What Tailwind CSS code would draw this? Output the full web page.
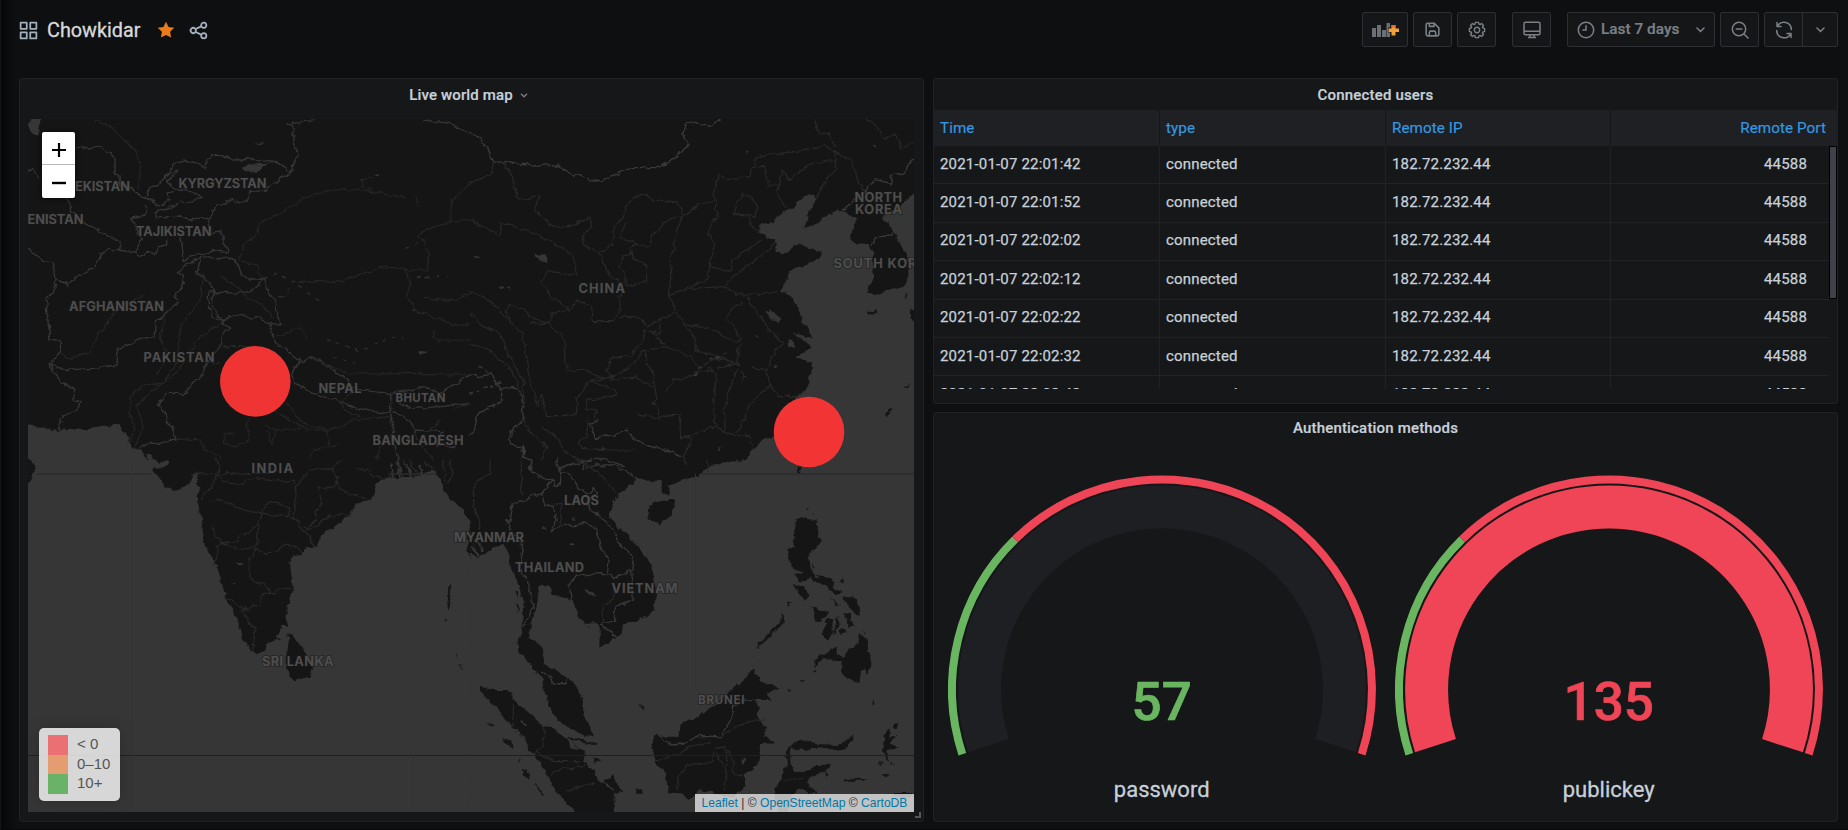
<!DOCTYPE html>
<html lang="en">
<head>
<meta charset="utf-8">
<title>Chowkidar</title>
<script src="https://cdn.jsdelivr.net/npm/@tailwindcss/browser@4"></script>
</head>
<body class="bg-[#0e0f11] font-['Roboto',sans-serif] text-[#c7d0d9]">
<div class="relative flex h-[830px] w-[1848px] flex-col overflow-hidden">
  <div class="absolute inset-y-0 left-0 w-4 bg-linear-to-r from-black/60 to-transparent"></div>
  <div class="absolute inset-y-0 left-0 w-px bg-[#141619]"></div>
  <div class="absolute inset-x-0 bottom-0 h-px bg-[#08070c]"></div>

  <header class="flex h-[78px] shrink-0 items-start justify-between pr-[10px] pl-[18px]">
    <div class="flex h-[60px] items-center">
      <svg class="size-[21px]" viewBox="0 0 24 24" fill="#a4b0bd"><path d="M10,13H3a1,1,0,0,0-1,1v7a1,1,0,0,0,1,1h7a1,1,0,0,0,1-1V14A1,1,0,0,0,10,13ZM9,20H4V15H9ZM21,2H14a1,1,0,0,0-1,1v7a1,1,0,0,0,1,1h7a1,1,0,0,0,1-1V3A1,1,0,0,0,21,2ZM20,9H15V4h5Zm1,4H14a1,1,0,0,0-1,1v7a1,1,0,0,0,1,1h7a1,1,0,0,0,1-1V14A1,1,0,0,0,21,13Zm-1,7H15V15h5ZM10,2H3A1,1,0,0,0,2,3v7a1,1,0,0,0,1,1h7a1,1,0,0,0,1-1V3A1,1,0,0,0,10,2ZM9,9H4V4H9Z"/></svg>
      <h1 class="ml-2 w-[110px] pt-px text-[19.800px] leading-none text-[#d8d9da] [-webkit-text-stroke:0.3px]">Chowkidar</h1>
      <svg class="size-[18px]" viewBox="0 0 18 18" fill="#eb7b18"><path d="M9 .8l2.5 5.2 5.8.8-4.2 4 1 5.8L9 13.9l-5.1 2.7 1-5.8-4.2-4 5.800-.8z"/></svg>
      <svg class="ml-[13px] size-[21px]" viewBox="0 0 24 24" fill="#a4b0bd"><path d="M18,14a4,4,0,0,0-3.08,1.48l-5.1-2.35a3.64,3.64,0,0,0,0-2.26l5.1-2.35A4,4,0,1,0,14,6a4.17,4.17,0,0,0,.07.71L8.79,9.14a4,4,0,1,0,0,5.72l5.28,2.43A4.17,4.17,0,0,0,14,18a4,4,0,1,0,4-4ZM18,4a2,2,0,1,1-2,2A2,2,0,0,1,18,4ZM6,14a2,2,0,1,1,2-2A2,2,0,0,1,6,14Zm12,6a2,2,0,1,1,2-2A2,2,0,0,1,18,20Z"/></svg>
    </div>
    <div class="mt-3 flex h-[35px] gap-[5px] text-[#7b8087]">
      <div class="flex w-[46px] items-center justify-center rounded-xs border border-[#2c3033] bg-[#141618]">
        <svg class="h-[16px] w-[27px]" viewBox="0 0 27 16"><path fill="#6b7077" d="M0 6h4v9H0zM5 3h4v12H5zM10 8h4v7h-4zM14.500 1h3.500v4.500h-2v5h2v4.500h-3.500z"/><path fill="#f2a03d" d="M19.500 3h4v3.500H27v3.500h-3.500v3.500h-4V10H16.500V6.500h3z"/><path fill="#ee6a33" d="M19.500 3h4v2.500h-4z"/></svg>
      </div>
      <div class="flex w-[39px] items-center justify-center rounded-xs border border-[#2c3033] bg-[#141618]">
        <svg class="size-[19px]" viewBox="0 0 24 24" fill="currentColor"><path d="M20.710,9.290l-6-6a1,1,0,0,0-.32-.21A1.090,1.090,0,0,0,14,3H6A3,3,0,0,0,3,6V18a3,3,0,0,0,3,3H18a3,3,0,0,0,3-3V10A1,1,0,0,0,20.710,9.290ZM9,5h4V7H9Zm6,14H9V16a1,1,0,0,1,1-1h4a1,1,0,0,1,1,1Zm4-1a1,1,0,0,1-1,1H17V16a3,3,0,0,0-3-3H10a3,3,0,0,0-3,3v3H6a1,1,0,0,1-1-1V6A1,1,0,0,1,6,5H7V8A1,1,0,0,0,8,9h6a1,1,0,0,0,1-1V6.410l4,4Z"/></svg>
      </div>
      <div class="flex w-[39px] items-center justify-center rounded-xs border border-[#2c3033] bg-[#141618]">
        <svg class="size-[18px]" viewBox="-9 -9 18 18" fill="none" stroke="currentColor" stroke-width="1.400" stroke-linejoin="round"><circle r="2.700"/><path d="M-1.600-7.600H1.600L2-5.800 3-5.400 4.600-6.500 6.500-4.600 5.400-3 5.800-2 7.600-1.600V1.600L5.800 2 5.400 3 6.500 4.600 4.600 6.500 3 5.400 2 5.800 1.600 7.600H-1.600L-2 5.800-3 5.400-4.600 6.500-6.500 4.600-5.400 3-5.800 2-7.600 1.600V-1.600L-5.800-2-5.400-3-6.500-4.600-4.600-6.500-3-5.400-2-5.800Z"/></svg>
      </div>
      <div class="ml-[11px] flex w-[39px] items-center justify-center rounded-xs border border-[#2c3033] bg-[#141618]">
        <svg class="size-[18px]" viewBox="0 0 18 18" fill="none" stroke="currentColor" stroke-width="1.500" stroke-linejoin="round"><rect x="1" y="1.300" width="16" height="12.500" rx="1.500"/><path d="M1 10.300h16M7 14v2M11 14v2M5 16.400h8"/></svg>
      </div>
      <div class="ml-[11px] flex w-[148px] items-center rounded-xs border border-[#2c3033] bg-[#141618] pl-[9px]">
        <svg class="size-[18px]" viewBox="0 0 18 18" fill="none" stroke="currentColor" stroke-width="1.500" stroke-linecap="round"><circle cx="9" cy="9" r="7.700"/><path d="M9 4.800V9H6"/></svg>
        <span class="ml-[6px] w-[95px] text-[15.400px] leading-none font-medium whitespace-nowrap [-webkit-text-stroke:0.2px]">Last 7 days</span>
        <svg class="h-[6px] w-[9px]" viewBox="0 0 9 6" fill="none" stroke="currentColor" stroke-width="1.500" stroke-linecap="round"><path d="M1 1l3.500 3.500L8 1"/></svg>
      </div>
      <div class="flex w-[39px] items-center justify-center rounded-xs border border-[#2c3033] bg-[#141618]">
        <svg class="size-[18px]" viewBox="0 0 18 18" fill="none" stroke="currentColor" stroke-width="1.500" stroke-linecap="round"><circle cx="8" cy="8" r="6.700"/><path d="M5.200 8h5.600M13 13l4 4"/></svg>
      </div>
      <div class="flex w-[74px] rounded-xs border border-[#2c3033] bg-[#141618]">
        <div class="flex w-[38px] items-center justify-center border-r border-[#2c3033]">
          <svg class="size-[18px]" viewBox="0 0 18 18" fill="none" stroke="currentColor" stroke-width="1.500" stroke-linecap="round" stroke-linejoin="round"><path d="M2 1.500V5.500H6M2.500 5.200A7.300 7.300 0 0 1 16.300 8.600M16 16.500V12.500H12M15.500 12.800A7.300 7.300 0 0 1 1.700 9.400"/></svg>
        </div>
        <div class="flex flex-1 items-center justify-center">
          <svg class="h-[6px] w-[9px]" viewBox="0 0 9 6" fill="none" stroke="currentColor" stroke-width="1.500" stroke-linecap="round"><path d="M1 1l3.500 3.500L8 1"/></svg>
        </div>
      </div>
    </div>
  </header>

  <main class="flex h-[744px] gap-[9px] pr-[10px] pl-[19px]">
    <section class="relative flex w-[905px] flex-col rounded-[3px] border border-[#202226] bg-[#151719] px-2">
      <div class="flex h-10 shrink-0 items-center justify-center gap-[7px] pr-[6px] pb-[8px]">
        <h2 class="text-[15px] leading-none font-medium tracking-[0.150px] [-webkit-text-stroke:0.2px]">Live world map</h2>
        <svg class="h-[5px] w-[8px]" viewBox="0 0 8 5" fill="none" stroke="#7b8087" stroke-width="1.300"><path d="M1 .8l3 3 3-3"/></svg>
      </div>
      <div class="relative h-[693px] w-[886px] overflow-hidden bg-[#151515]">
        <svg class="block h-[693px] w-[886px]" viewBox="28 119 886 693" fill="none" stroke-linejoin="round" stroke-linecap="round">
          <defs>
            <filter id="rough" filterUnits="userSpaceOnUse" x="0" y="90" width="950" height="750" color-interpolation-filters="sRGB">
              <feTurbulence type="fractalNoise" baseFrequency="0.130" numOctaves="3" seed="4" result="n"/>
              <feDisplacementMap in="SourceGraphic" in2="n" scale="6" xChannelSelector="R" yChannelSelector="G"/>
            </filter>
          </defs>
          <g filter="url(#rough)">
            <rect x="0" y="90" width="950" height="750" fill="#151515"/>
            <!-- north-west quarter -->
            <g transform="translate(20 110) scale(.33333)">
              <path fill="#363636" d="M0 946L24 946 60 952 110 962 160 955 205 958 250 950 295 942 305 962 322 972 332 1005 350 1018 368 1022 388 1054H32L24 1040H0zM35 0H62L60 50 50 80 35 72 25 50zM665 175L700 160 740 158 715 187 690 187zM1060 195L1080 193 1078 200zM1195 720L1220 722 1205 733zM700 98L735 98 730 104z"/>
              <path fill="#363636" d="M380 1030L400 1045 415 1060 448 1050 430 1075 395 1070z"/>
              <g stroke="#363636" stroke-width="4">
                <path d="M165 115L235 112 245 108 285 148 285 195 300 197 302 225 330 232 350 250 375 262 390 235 420 220 445 195 475 180 440 215M420 220L470 158 500 152 555 172 562 145 590 132 640 150 700 148 770 155 815 185 820 155 835 135 822 100 822 55 802 42 840 38 850 32 900 28"/>
                <path d="M815 190L790 200 740 240 690 245 680 272 660 280 640 265 600 285 575 300 578 320 565 330 575 370 605 365 612 400 625 425M375 262L400 270 405 290 430 285 450 265 440 250 460 245M440 215L460 235 500 240 545 258 520 275 480 280 430 300 405 305 410 320 470 320 510 330 530 325 565 325"/>
                <path d="M380 290L375 315 335 325 345 345 365 385 345 430 360 442 385 425 405 435 415 410 440 405 440 385M480 385L490 455 530 430 555 435 580 420 620 428M140 265L155 300 200 345 300 395 300 420 345 430M24 412L70 455 100 458 105 510 145 522 175 495 225 470 240 432 270 418 300 420M0 180H40L60 210"/>
                <path d="M105 510L100 550 78 570 80 600 90 690 120 695 122 720 90 765 140 780 220 775 290 765 295 715 340 700 345 688 405 680 410 630 440 610 470 580 470 550 490 525 490 500 475 485 500 460 545 445 600 442 640 445 655 465 665 495 690 510 735 510 740 540 765 570 765 595 785 640 750 648M90 765L125 820 160 830 162 870 180 880 175 895 125 920 118 960"/>
                <path d="M735 510L720 520 690 545 640 550 595 545 565 550 565 590 575 620 605 635 632 655 605 675 600 710 560 760 545 800 520 815 495 850 440 850 415 885 435 905 440 935 455 950 468 990 420 1000 385 1000 350 1020M605 635L640 615 690 620 720 625 755 645M545 445L530 490 570 515 585 545 575 570 580 600 605 635"/>
                <path d="M750 648L765 700 800 720 825 745 850 755 870 740 915 760 950 790 965 795 1000 835 1060 845 1115 850 1170 840 1210 830 1260 850 1350 795M840 745L815 790 820 815 880 850 930 865 970 875 1010 895 1060 905 1112 910 1112 850M1112 905L1120 960 1110 975 1125 1005 1135 1060M1120 905L1170 930 1180 960 1270 965 1250 1005 1300 1010M1130 880L1180 895 1260 890 1310 885 1350 880M1210 30L1290 40 1350 70"/>
              </g>
              <g stroke="#262626" stroke-width="3.500">
                <path d="M220 30L270 45 310 90 345 120 362 160 355 235M658 450L665 405 705 380 720 340 780 310 860 260 940 240 1000 238 1060 245 1155 265M1350 220L1295 275 1290 335 1195 370 1230 435 1220 480 1160 480 1100 470 1030 490 960 515 890 512 820 515M1290 335L1350 330M1155 480L1170 520 1160 560 1190 605 1240 620 1300 645 1350 640M1215 565L1300 572 1350 550M1235 665L1250 690 1350 690"/>
                <path d="M370 555L300 590 260 640 230 680 210 725 150 745 120 730M550 500L540 570 480 650 470 760 430 820 370 825 330 860 330 920 345 960 325 1000M600 640L540 680 470 790 400 840 350 890 370 950 345 1010M440 610L420 680 440 730 415 790M770 680L840 650 860 690M870 745L960 780 1000 792 1200 790 1300 795 1350 790M605 500L650 530 680 560 730 590 760 625"/>
                <path d="M800 880L850 940 930 960 1000 930 1110 920M770 905L860 960 920 960 930 1010 960 1000M470 985L540 990 560 1020 600 1040 600 1050M690 925L680 950 690 990 640 1010 610 1000 615 970 645 975M740 950L770 960 755 1000 740 960M770 960L840 955M1000 835L960 880 970 900 1020 920M665 455L710 465 725 500M600 710L700 710M550 760H600M870 1045L875 1020 930 1010M1180 960L1200 1000 1240 1050M1300 900L1350 880M1260 930L1230 960M1120 975L1080 1010 1070 1050"/>
                <path stroke="#303030" stroke-width="4" stroke-dasharray="8 22" d="M735 505L770 490 820 515 800 555 770 570M840 530L900 575M920 690L1020 720 1060 705 1110 680 1150 680M1190 500L1290 500M1160 415L1215 390M1175 600L1200 605M940 740L1020 765"/>
                <path d="M1188 260L1195 285M1030 215L1025 230 1060 240M1060 200L1025 212"/>
              </g>
            </g>
            <!-- north-east quarter -->
            <g transform="translate(470 110) scale(.33333)">
              <path fill="#363636" d="M1005 252L1030 255 1040 270 1010 318 1020 320 1000 355 1030 345 1060 322 1105 303 1125 305 1160 330 1150 355 1140 385 1160 400 1195 402 1210 430 1205 470 1210 500 1198 530 1190 550 1215 555 1270 535 1300 528 1315 500 1312 440 1290 395 1270 360 1240 325 1240 315 1300 280 1332 250 1400 240V1056H826L845 1020 880 990 910 980 940 930 970 870 1015 830 1015 800 1030 770 1000 745 975 745 1025 710 1000 690 960 665 1025 685 1020 660 995 635 990 610 970 565 932 540 965 480 1050 445 1055 425 1000 410 985 402 960 420 940 432 920 425 918 390 885 382 868 360 875 340 910 340 930 310 970 295zM195 435L225 432 235 458 210 452zM955 690L972 700 970 715 958 708zM885 605L905 600 935 630 925 640z"/>
              <path fill="#151515" d="M1190 605L1215 598 1218 606 1195 614zM1320 600H1340V635L1325 625zM1305 550H1312L1308 572zM1245 915L1270 892 1268 900 1250 920zM1305 835L1320 822V830z"/>
              <path stroke="#3a3a3a" stroke-width="4" d="M0 70L30 80 72 157 110 155 200 165 265 168 290 185 350 205 395 213 460 182 500 173 560 173 600 155 640 118 655 105 638 75 650 38 670 35 715 52 750 28M1120 300L1150 270 1185 245 1215 208 1265 222 1260 195 1300 190 1330 145M1205 405L1220 380 1265 378 1275 365M0 790L30 800 65 790 80 820 95 840 130 825 155 855 160 930 120 970 118 1005 160 1010 160 1045 185 1050 180 1080M95 840L95 875 25 905 15 950 0 975M380 985L405 975 430 980 470 960 490 985 540 1010 580 1020 635 1040M380 985L360 945 385 930M270 1075L330 1055 400 1045 460 1070"/>
              <path stroke="#292929" stroke-width="3.500" d="M105 160L125 205 145 270 210 260 190 300 240 340 275 355 360 325 365 350 340 380 345 410 385 425 430 405 430 350 460 325 465 300 462 290 510 252 545 270 620 275 637 295 635 320 605 325 580 340 545 380 540 408 510 408 450 380 465 340M72 157L60 195 0 218M0 330L90 375 95 340 135 350 200 375 280 415 310 440 320 495 290 490 235 485 215 510 240 560 290 590 300 600 250 610 235 640 180 620 165 600 120 585 110 600 120 640 155 670 165 720 180 820 205 890 215 850 230 920 280 920 320 910 320 870 355 815 430 800 480 770 525 720 590 712"/>
              <path stroke="#292929" stroke-width="3.500" d="M637 320L620 360 612 410 600 450 605 490 595 550 640 540 715 505 720 460 735 410 715 375 725 340 745 320 735 290 740 275 730 240 750 190 765 210 840 200 845 170 885 170 895 225 930 225 920 250 950 295M635 320L680 285 735 270M595 550L670 535 765 530 800 490 870 440 915 402M720 470L785 485 785 450 875 390M765 530L800 550 860 555 920 545M855 165L860 140 930 130 1030 118 1060 105 1095 125 1100 175 1065 210 1040 265M1095 125L1140 150 1160 190 1180 245M930 225L935 180 960 208 1010 165 1090 150M1095 110L1075 70 1045 75 1035 30M1190 30L1225 50 1240 90 1275 70 1295 115 1330 100"/>
              <path stroke="#292929" stroke-width="3.500" d="M595 550L620 610 640 640 720 655 780 690 810 690 800 660 770 620 790 590 820 580M640 640L670 680 685 725 730 735 800 760 810 700M450 620L500 620 530 645 560 635 610 610M450 560L450 600 430 635 370 635 365 590 320 570 300 605M385 425L420 500 455 515 455 560M500 400L480 415 485 440 530 470 530 515 465 530 465 490 450 480 455 435 480 430M180 640L235 640 280 680 290 785 350 780 380 800 440 810 500 800 550 835 555 790 530 765 525 720M360 815L440 840 440 850 400 865 350 870 350 895 380 900 370 930M555 835L560 870 545 880 565 890 560 925 500 910M590 840L610 810 660 800 720 775 740 790 730 880 735 950M740 775L810 760M560 925L630 910 635 980 670 975 720 950 790 975 840 980 850 1020M800 780L765 880 765 970M890 780L900 830 870 850 840 890 800 970M840 770L890 780 905 740 940 700 900 665 830 560M900 830L930 860 980 860M820 785L820 820M635 980L665 985 640 1040 655 1060M160 820L165 950 230 1010 215 1050M215 950L260 985 290 1030 370 1070M355 930L350 980 325 1000 335 1015 430 1020 500 1020M0 545L60 570 110 625M0 610L40 650 90 670 110 725 165 820M0 700L60 720 130 790 160 860M840 255L860 290 855 320 790 310 800 280 820 255 840 255M840 320L840 350 870 365M540 660L590 710 660 740 690 770 740 745 800 760M570 640L570 670 525 660 520 690 480 740 425 745 410 780 430 805"/>
              <path stroke="#343434" stroke-width="5" stroke-dasharray="7 15" d="M90 530L125 538M20 440L30 444M720 750L770 730M690 770L670 800M815 780L825 800M860 680L875 690M900 600L925 630M910 770L925 775M830 128L833 128M1212 108L1216 112M750 1015L754 1012M0 850L60 830 90 820M30 770L60 790"/>
            </g>
            <!-- south-west quarter -->
            <g transform="translate(20 460) scale(.33333)">
              <path fill="#363636" d="M0 4L36 0H388L415 10 442 2 430 18 395 28 410 45 435 78 462 92 485 86 508 72 518 52 512 38 530 34 535 60 530 65 538 85 531 118 538 150 545 190 552 240 562 270 578 295 590 325 605 365 618 415 640 450 660 500 670 540 690 568 710 582 730 573 742 548 780 538 768 532 782 498 800 498 800 440 818 395 815 350 810 310 820 288 845 285 860 262 890 260 900 232 960 190 1010 135 1055 115 1068 90 1065 75 1075 60 1105 52 1140 54 1180 50 1215 38 1235 32 1248 40 1255 50 1270 85 1280 105 1310 128 1330 150 1352 190 1342 240 1345 290 1352 300V1140H0z"/>
              <path fill="#151515" d="M0 0H32L50 22 24 68H0zM805 520L820 525 840 555 858 585 862 605 880 625 868 650 825 664 808 650 800 615 800 570 808 540zM1290 375L1297 378 1290 420 1282 455 1280 440zM1320 615L1328 618 1326 632zM1272 480L1277 480 1273 490zM1310 580L1313 582 1308 590z"/>
              <path stroke="#292929" stroke-width="3.500" d="M530 40L590 45 598 15 585 0M590 45L610 65 655 75 700 55 780 65 825 60 830 130 820 175 845 205 875 240 885 260M545 115L570 80 590 45M570 120L610 125 670 150 725 162 750 125 805 140 805 170 725 162 715 190 690 215 660 230 650 245 605 250 590 230 575 200M605 250L660 270 710 260 715 190M710 265L740 280 775 270 790 255 835 260 845 280M710 265L690 300 690 350 705 365 740 375 750 400 810 378M690 440L720 435 725 405 750 400M620 410L660 440 690 445 665 450 690 490 705 500 700 570M590 255L590 290 580 320M605 250L590 260M805 170L840 190 860 205 890 180 885 155 905 130 895 85 945 75 955 55 940 30 960 0M950 60L960 90 1010 105 1040 120M1010 135L990 165 930 165 890 195 860 210M830 80L870 30 940 25M600 42L690 38 780 35M1010 30L1040 25 1060 45 1090 55M1135 0L1145 50M1170 0L1190 45M1150 0L1160 30M1215 0L1240 30M1270 0L1275 60M1290 0L1300 40 1280 70"/>
              <path stroke="#363636" stroke-width="6" d="M1115 10L1118 50M1138 8L1140 50M1165 15L1172 50M1200 20L1205 45M655 312L665 308M638 370L642 370"/>
            </g>
            <!-- south-east quarter -->
            <g transform="translate(470 460) scale(.33333)">
              <path fill="#363636" d="M-2 280L20 290 45 282 70 262 100 255 115 270 122 320 150 380 160 420 158 470 152 520 140 570 170 600 190 625 215 650 222 690 240 740 260 780 300 805 340 825 368 832 360 800 340 765 338 710 315 675 290 655 265 632 225 615 215 565 195 540 178 535 182 490 200 440 208 380 240 377 245 408 285 410 310 430 325 470 345 490 370 487 390 495 388 563 420 545 455 520 460 490 510 480 550 455 558 400 552 350 540 310 510 265 480 235 440 195 420 165 430 125 460 90 500 58 520 55 550 65 575 60 575 95 595 108 600 95 590 80 610 70 690 45 720 15 755 8 830 0H1400V1140H-2z"/>
              <g fill="#151515">
                <path d="M535 150L550 130 590 120 618 120 615 140 600 170 570 192 540 180zM975 180L1000 175 1042 182 1040 210 1052 240 1030 270 1015 290 1018 320 1035 350 1060 355 1090 380 1115 400 1100 405 1060 375 1020 355 990 365 978 345 1000 335 975 325 955 300 950 268 975 268 970 230zM970 375L1005 380 1015 405 1005 422 985 400zM1040 345L1075 350 1095 370 1085 380zM1105 365L1120 355 1122 372zM1120 412L1160 412 1170 465 1150 460 1130 430zM1120 458L1140 465 1152 500 1138 500zM1080 415L1110 435 1100 438zM1030 440L1075 455 1055 485 1033 485zM1065 480L1095 475 1085 510 1075 543 1050 520 1065 505zM1105 470L1108 490 1085 530 1088 510zM1105 510L1125 505 1130 518 1110 525zM1170 520L1192 540 1195 570 1205 600 1195 640 1185 625 1170 635 1165 672 1130 655 1110 635 1112 605 1085 600 1060 595 1045 605 1035 625 1030 610 1045 585 1070 580 1085 565 1100 562 1100 580 1115 590 1140 570 1165 555zM1028 635L1042 633 1038 642zM990 660L1010 660 1000 664zM855 565L895 525 930 490 938 462 945 485 915 515 880 550zM950 425L968 425 955 445zM950 690L968 688 955 694z"/>
                <path d="M785 690L830 650 848 625 865 650 880 668 930 685 890 700 905 720 850 720 870 745 860 765 885 805 880 825 918 850 870 852 865 915 825 945 825 975 790 1010 740 1000 690 990 655 1020 640 1000 595 1000 585 950 575 925 555 905 550 870 543 850 560 820 590 830 628 830 632 790 690 765 730 740z"/>
                <path d="M1155 825L1135 860 1100 870 1050 862 1005 870 965 865 960 900 975 935 1000 940 1040 915 1085 915 1060 935 1020 955 1010 965 1045 1000H1020L985 985 965 1005 960 1060H925L915 990 935 950 940 925 950 920 950 870 970 850 1005 840 1035 852 1110 855zM1240 850L1245 820 1260 805 1255 830 1285 825 1262 850 1290 865 1250 870 1250 895 1275 920 1245 895zM1270 795L1285 790 1280 808 1270 805zM1235 945L1265 945 1250 952zM1120 955L1195 958 1180 962 1125 962zM1225 905L1245 910 1235 915zM1260 1000L1320 998 1345 1010 1300 1015zM1210 715L1218 720 1212 740z"/>
                <path d="M30 680L70 690 115 690 140 730 180 760 220 800 250 805 285 830 300 860 345 875 340 905 370 930 380 960 410 975 435 1000 430 1070H330L290 1030 250 980 230 945 195 885 175 870 160 830 125 800 90 755 50 715 30 695zM400 965L430 945 440 975 460 995 435 998 420 975zM495 985H515L518 1000 498 1005zM510 735L522 738 518 750zM100 830L125 850 128 865 105 850zM155 925L175 940 180 955 160 945zM48 782L72 795 70 800zM145 890L150 905 146 908zM190 965L225 1005 220 1008 195 975zM290 830L380 850 375 856 300 840zM370 895L395 900 375 908zM980 20H995L990 42 982 35zM1060 930L1080 945 1070 950zM1025 315L1035 320 1030 328zM1180 510L1188 515 1184 520z"/>
                <path d="M135 390L148 395 145 420zM140 430L150 440 146 460zM352 495L360 500 358 508zM1010 145L1015 147 1012 152zM1028 160L1032 162 1029 166zM1162 750L1166 752 1164 756zM845 585L848 588 846 592z"/>
              </g>
              <path stroke="#383838" stroke-width="4" d="M190 0L180 35 220 55 245 55 255 75 272 70 272 35 300 40 320 70 325 90 365 100 370 85 380 100 355 120 355 145 400 175 435 220 455 260 490 290 485 330 430 355M272 35L260 0M245 60L215 100 180 110 160 125 130 130 120 180 110 180 125 215 155 250 160 270 150 310 155 340 175 360 180 400 192 440 160 500M215 100L225 135 250 140 258 180 240 215 285 190 310 205 345 185 380 210 390 260 418 300 412 340 320 345 297 375 305 430M412 340L430 355M485 330L490 420 440 435 430 465 440 480 400 490M215 640L245 650 250 672 285 670 290 655M350 390L360 405 375 408M560 820L600 855 640 852 680 830 755 830 775 790 790 770 790 735 825 720 870 722M335 0L340 30 380 15 430 15 470 35 500 58"/>
              <path stroke="#292929" stroke-width="3.500" d="M130 730L130 770 125 800M190 880L215 860 225 800M200 875L255 905 330 905M245 945L275 925 345 920M290 995L330 980 370 970M285 830L330 870M15 70L10 130 25 180 30 210M60 0V40L15 70M150 0L155 60 155 110M225 135L275 130 270 200M320 0L390 40 440 100M555 900L620 885 660 860 725 845M620 990L625 945 660 915 725 905 735 865 770 860 770 950 760 990M775 870L790 910 785 940 820 950M755 830L800 800 840 785 880 780M740 880L760 920M400 490L400 440 430 415 430 380M0 210L15 260M650 20L640 0M710 0L715 35M940 960L970 960 1000 955"/>
              <path stroke="#363636" stroke-width="6" d="M155 785L170 795M350 390L375 408M815 905L825 900M5 262L25 285M20 240L40 272M305 178L310 180M302 250L305 250M225 205L228 205M395 495L440 530"/>
            </g>
          </g>
          <path stroke="#202020" stroke-width="1" d="M28 755.500H914"/>
          <path stroke="#2d2d2d" stroke-width="1.500" d="M37 474H151M194 474H197M389 474H436M701 474H914"/>
          <path stroke="#333333" stroke-width="1" d="M131.500 465V812M695.500 474V690M413.500 756V812"/>
          <g font-family="Inter, sans-serif" font-weight="700" font-size="12.800" fill="#4e4e4e" stroke="#1a1a1a" stroke-opacity=".55" stroke-width="2" paint-order="stroke" lengthAdjust="spacingAndGlyphs">
            <text x="75" y="191.300" textLength="55">EKISTAN</text>
            <text x="178.500" y="188.300" textLength="88">KYRGYZSTAN</text>
            <text x="27.500" y="223.800" textLength="56">ENISTAN</text>
            <text x="136" y="236" textLength="75.500">TAJIKISTAN</text>
            <text x="69" y="311.300" textLength="95">AFGHANISTAN</text>
            <text x="143.500" y="362.300" textLength="71">PAKISTAN</text>
            <text x="318.500" y="393.300" textLength="43">NEPAL</text>
            <text x="395.500" y="401.500" textLength="50" font-size="11.500">BHUTAN</text>
            <text x="372.500" y="445" textLength="91">BANGLADESH</text>
            <text x="251.500" y="473.300" textLength="41.500">INDIA</text>
            <text x="578.500" y="293.300" textLength="46.500">CHINA</text>
            <text x="854.500" y="202" textLength="47.500">NORTH</text>
            <text x="855" y="214.300" textLength="47">KOREA</text>
            <text x="833.500" y="267.800" textLength="102">SOUTH KOREA</text>
            <text x="564" y="505" textLength="35">LAOS</text>
            <text x="454" y="541.800" textLength="70">MYANMAR</text>
            <text x="515" y="571.500" textLength="69">THAILAND</text>
            <text x="611.500" y="592.500" textLength="66">VIETNAM</text>
            <text x="262" y="666.300" textLength="71.500">SRI LANKA</text>
            <text x="698" y="704.300" textLength="46.500" font-size="11.500">BRUNEI</text>
          </g>
          <circle cx="255.300" cy="381.400" r="35.300" fill="#f03434"/>
          <circle cx="809" cy="432" r="35.300" fill="#f33435"/>
        </svg>
        <div class="absolute top-[13px] left-[14px] flex h-[66px] w-[33px] flex-col rounded-xs bg-white shadow-[0_1px_5px_rgba(0,0,0,0.65)]">
          <div class="flex h-[33px] items-center justify-center border-b border-[#bbb] pt-1"><svg class="size-[14px]" viewBox="0 0 14 14" fill="none" stroke="#000" stroke-width="2.200"><path d="M0 7H14M7 0V14"/></svg></div>
          <div class="flex h-[33px] items-center justify-center pt-[3px]"><svg class="size-[14px]" viewBox="0 0 14 14" fill="none" stroke="#000" stroke-width="2.400"><path d="M0 7H14"/></svg></div>
        </div>
        <div class="absolute top-[609px] left-[11px] h-[73px] w-[81px] rounded-[5px] bg-white/80 pt-[7px] pl-[9px] font-['Liberation_Sans',sans-serif] text-[15px] text-[#555] shadow-[0_0_15px_rgba(0,0,0,0.2)]">
          <div class="flex h-5 items-center gap-[9px]"><span class="h-5 w-5 bg-[#ea7073]"></span><span class="pb-[2px]">&lt; 0</span></div>
          <div class="flex h-[19px] items-center gap-[9px]"><span class="h-[19px] w-5 bg-[#e49d71]"></span><span>0–10</span></div>
          <div class="flex h-5 items-center gap-[9px]"><span class="h-5 w-5 bg-[#69b268]"></span><span class="pb-[2px]">10+</span></div>
        </div>
        <div class="absolute right-0 bottom-0 flex h-[18px] w-[219px] items-center justify-center bg-white/70 font-['Liberation_Sans',sans-serif] text-[12.100px] whitespace-pre text-[#333]"><span class="text-[#0078a8]">Leaflet</span> | © <span class="text-[#0078a8]">OpenStreetMap</span> © <span class="text-[#0078a8]">CartoDB</span></div>
      </div>
      <div class="absolute right-[2px] bottom-[3px] size-[6px] border-r-2 border-b-2 border-[#53565a]"></div>
    </section>

    <div class="flex w-[905px] flex-col gap-2">
      <section class="h-[326px] rounded-[3px] border border-[#202226] bg-[#151719]">
        <h2 class="flex h-[31px] items-center justify-center pr-[20px] pt-px text-[15px] leading-none font-medium tracking-[0.180px] [-webkit-text-stroke:0.2px]">Connected users</h2>
        <div class="grid h-9 grid-cols-[226px_226px_225px_1fr] bg-[#1e2023] text-[15.200px] leading-none tracking-[0.080px] text-[#3398e0] [-webkit-text-stroke:0.2px]">
          <div class="flex items-center border-r border-[#151719] pt-px pl-[6px]">Time</div>
          <div class="flex items-center border-r border-[#151719] pt-px pl-[6px]">type</div>
          <div class="flex items-center border-r border-[#151719] pt-px pl-[6px]">Remote IP</div>
          <div class="flex items-center justify-end pt-px pr-[11px]">Remote Port</div>
        </div>
        <div class="relative h-[243px] overflow-hidden">
          <div id="rows" class="w-[895px] text-[15px] leading-none tracking-[0.180px] [-webkit-text-stroke:0.25px]"></div>
          <div class="absolute top-0 right-0 h-[153px] w-2 border border-black bg-[#3f404a]"></div>
        </div>
      </section>

      <section class="flex h-[410px] flex-col rounded-[3px] border border-[#202226] bg-[#151719]">
        <h2 class="flex h-[31px] items-center justify-center pr-[20px] text-[15px] leading-none font-medium tracking-[0.180px] [-webkit-text-stroke:0.2px]">Authentication methods</h2>
        <div class="grid flex-1 grid-cols-[447px_447px] pl-[5px]">
          <svg class="h-[377px] w-[447px]" viewBox="-223 -245.300 447 377" fill="none" text-anchor="middle">
            <path stroke="#1e1f23" stroke-width="43" d="M-173.500 56.400A182.400 182.400 0 1 1 173.500 56.400"/>
            <path stroke="#6ab660" stroke-width="8" d="M-199.700 64.900A210 210 0 0 1 -146.900 -150"/>
            <path stroke="#f04556" stroke-width="8" d="M-146.900 -150A210 210 0 0 1 199.700 64.900"/>
            <text x="-.3" y="30.300" font-size="53" font-weight="500" fill="#6ab660" stroke="#6ab660" stroke-width=".7">57</text>
            <text x="-.3" y="108" font-size="22" fill="#c7d0d9" stroke="#c7d0d9" stroke-width=".3">password</text>
          </svg>
          <svg class="h-[377px] w-[447px]" viewBox="-223 -245.300 447 377" fill="none" text-anchor="middle">
            <path stroke="#f04556" stroke-width="43" d="M-173.500 56.400A182.400 182.400 0 1 1 173.500 56.400"/>
            <path stroke="#6ab660" stroke-width="8" d="M-199.700 64.900A210 210 0 0 1 -146.900 -150"/>
            <path stroke="#f04556" stroke-width="8" d="M-146.900 -150A210 210 0 0 1 199.700 64.900"/>
            <text x="-.3" y="30.300" font-size="53" font-weight="500" fill="#f04556" stroke="#f04556" stroke-width=".7">135</text>
            <text x="-.3" y="108" font-size="22" fill="#c7d0d9" stroke="#c7d0d9" stroke-width=".3">publickey</text>
          </svg>
        </div>
      </section>
    </div>
  </main>
</div>
<script>
  const times = ['22:01:42', '22:01:52', '22:02:02', '22:02:12', '22:02:22', '22:02:32', '22:02:42'];
  document.getElementById('rows').innerHTML = times.map(t => `
    <div class="grid h-[38.400px] grid-cols-[226px_226px_225px_1fr] border-b border-[#202226]">
      <div class="flex items-center border-r border-[#202226] pb-[1px] pl-[6px]">2021-01-07 ${t}</div>
      <div class="flex items-center border-r border-[#202226] pb-[1px] pl-[6px]">connected</div>
      <div class="flex items-center border-r border-[#202226] pb-[1px] pl-[6px]">182.72.232.44</div>
      <div class="flex items-center justify-end pr-[22px] pb-[1px]">44588</div>
    </div>`).join('');
</script>
</body>
</html>
